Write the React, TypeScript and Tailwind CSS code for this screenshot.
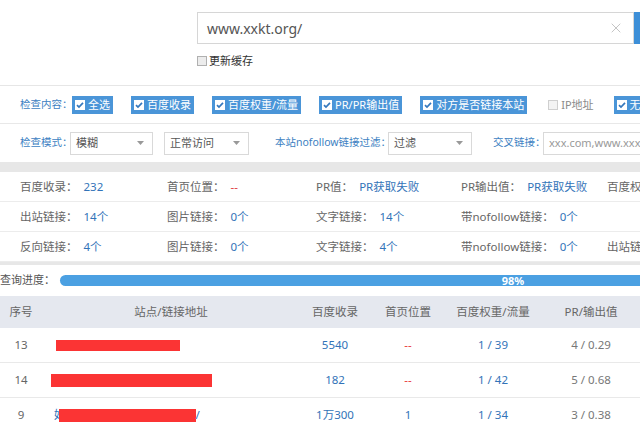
import { X } from "lucide-react"

const font = { fontFamily: '"Noto Sans", "Noto Sans CJK SC", sans-serif' }

const Check = () => (
    <svg width="10" height="10" viewBox="0 0 10 10" className="shrink-0">
        <rect x="0" y="0" width="10" height="10" fill="#fff" />
        <path d="M2 5.1 L4 7.1 L8 2.9" stroke="#3578bd" strokeWidth="1.7" fill="none" />
    </svg>
)

const Chip = ({ label, checked = true }: { label: string; checked?: boolean }) =>
    checked ? (
        <div className="flex items-center gap-[3px] h-[18px] pl-[3px] pr-[3px] bg-[#4a95d8] text-white text-[11px] leading-none">
            <Check />
            <span>{label}</span>
        </div>
    ) : (
        <div className="flex items-center gap-[3px] h-[18px] pl-[3px] pr-[2px] text-[#8a8a8a] text-[11px] leading-none">
            <span className="w-[10px] h-[10px] border border-[#cfcfcf] bg-[#f3f3f3]" />
            <span>{label}</span>
        </div>
    )

const Select = ({ value, width }: { value: string; width: string }) => (
    <div className={`flex items-center justify-between h-[23px] border border-[#d9d9d9] pl-[5px] pr-[8px] text-[11px] text-[#555] ${width}`}>
        <span>{value}</span>
        <svg width="7" height="4" viewBox="0 0 7 4"><path d="M0 0 H7 L3.5 4 Z" fill="#999" /></svg>
    </div>
)

type Stat = [string, string, string?]

const statRows: Stat[][] = [
    [["百度收录：", "232"], ["首页位置：", "--", "red"], ["PR值：", "PR获取失败"], ["PR输出值：", "PR获取失败"], ["百度权重：", "1"]],
    [["出站链接：", "14个"], ["图片链接：", "0个"], ["文字链接：", "14个"], ["带nofollow链接：", "0个"], ["", ""]],
    [["反向链接：", "4个"], ["图片链接：", "0个"], ["文字链接：", "4个"], ["带nofollow链接：", "0个"], ["出站链接：", "14个"]],
]

const rows = [
    { no: "13", bar: "ml-[14px] w-[124px] h-[11px]", count: "5540", pos: "--", weight: "1 / 39", pr: "4 / 0.29" },
    { no: "14", bar: "ml-[9px] w-[161px] h-[13px]", count: "182", pos: "--", weight: "1 / 42", pr: "5 / 0.68" },
    { no: "9", bar: "", count: "1万300", pos: "1", weight: "1 / 34", pr: "3 / 0.38" },
]

const cols = "grid grid-cols-[42px_258px_70px_76px_94px_102px_120px]"

export default function App() {
    return (
        <div className="w-[640px] h-[432px] overflow-hidden bg-white" style={font}>
            <div className="w-[1000px]">
                <div className="h-[86px] border-b border-[#e6e6e6] pt-[12px] pl-[197px]">
                    <div className="flex">
                        <div className="flex items-center justify-between w-[437px] h-[32px] border border-[#d6d6d6] pl-[9px] pr-[9px]">
                            <span className="text-[14px] text-[#555]">www.xxkt.org/</span>
                            <X size={16} strokeWidth={1.2} className="text-[#b5b5b5]" />
                        </div>
                        <div className="w-[70px] h-[32px] bg-[#3d8fd8]" />
                    </div>
                    <div className="flex items-center gap-[2px] mt-[9px] h-[16px]">
                        <span className="w-[10px] h-[10px] border border-[#b0b0b0] bg-[#ececec]" />
                        <span className="text-[11px] text-[#333]">更新缓存</span>
                    </div>
                </div>

                <div className="flex items-center h-[38px] border-b border-[#e8e8e8] pl-[20px] gap-[18px]">
                    <div className="flex items-center gap-[2px]">
                        <span className="w-[50px] whitespace-nowrap text-[10.5px] text-[#3d7fc2]">检查内容：</span>
                        <Chip label="全选" />
                    </div>
                    <Chip label="百度收录" />
                    <Chip label="百度权重/流量" />
                    <Chip label="PR/PR输出值" />
                    <Chip label="对方是否链接本站" />
                    <Chip label="IP地址" checked={false} />
                    <Chip label="无效链接" />
                </div>

                <div className="flex items-center h-[38px] pl-[20px] text-[10.5px] text-[#3d7fc2] whitespace-nowrap">
                    <span className="w-[50px]">检查模式：</span>
                    <Select value="模糊" width="w-[83px]" />
                    <div className="ml-[11px]"><Select value="正常访问" width="w-[85px]" /></div>
                    <span className="ml-[26px] w-[110px]">本站nofollow链接过滤：</span>
                    <div className="ml-[3px]"><Select value="过滤" width="w-[84px]" /></div>
                    <span className="ml-[21px] w-[47px]">交叉链接：</span>
                    <div className="ml-[3px] flex items-center w-[300px] h-[23px] border border-[#d9d9d9] pl-[5px] text-[11px] text-[#999]">xxx.com,www.xxx.com</div>
                </div>

                <div className="h-[10px] bg-[#e7e7e7]" />

                {statRows.map((row, i) => (
                    <div key={i} className="grid grid-cols-[147px_149px_145px_146px_150px] items-center h-[30px] border-b border-[#ececec] pl-[20px] text-[11.5px] text-[#666]">
                        {row.map(([label, value, tone], j) => (
                            <div key={j} className="whitespace-nowrap">
                                <span>{label}</span>
                                <span className={`ml-[6px] ${tone === "red" ? "text-[#e03c3c]" : "text-[#3273b8]"}`}>{value}</span>
                            </div>
                        ))}
                    </div>
                ))}
                <div className="h-[3px] bg-[#e7e7e7]" />

                <div className="flex items-center h-[31px] text-[11px] text-[#555]">
                    <span>查询进度：</span>
                    <div className="ml-[5px] w-[906px] h-[11px] rounded-full bg-[#4ba0e2] flex items-center justify-center text-white text-[11px] font-bold leading-none">98%</div>
                </div>

                <div className={`${cols} items-center h-[32px] bg-[#e5e8ef] text-[11.5px] text-[#666] text-center`}>
                    <span>序号</span>
                    <span>站点/链接地址</span>
                    <span>百度收录</span>
                    <span>首页位置</span>
                    <span>百度权重/流量</span>
                    <span>PR/输出值</span>
                    <span>操作</span>
                </div>

                {rows.map(r => (
                    <div key={r.no} className={`${cols} items-center h-[35px] border-b border-[#e9e9e9] text-[11.5px] text-center`}>
                        <span className="text-[#666]">{r.no}</span>
                        {r.bar ? (
                            <div className="flex"><span className={`bg-[#fb3434] ${r.bar}`} /></div>
                        ) : (
                            <div className="flex items-center ml-[12px] text-[#3273b8]">
                                <span>好</span>
                                <span className="-ml-[7px] w-[137px] h-[13px] bg-[#fb3434]" />
                                <span>/</span>
                            </div>
                        )}
                        <span className="text-[#3273b8]">{r.count}</span>
                        <span className={r.pos === "--" ? "text-[#e8383a]" : "text-[#3273b8]"}>{r.pos}</span>
                        <span className="text-[#3273b8]">{r.weight}</span>
                        <span className="text-[#777]">{r.pr}</span>
                        <span />
                    </div>
                ))}
            </div>
        </div>
    )
}
